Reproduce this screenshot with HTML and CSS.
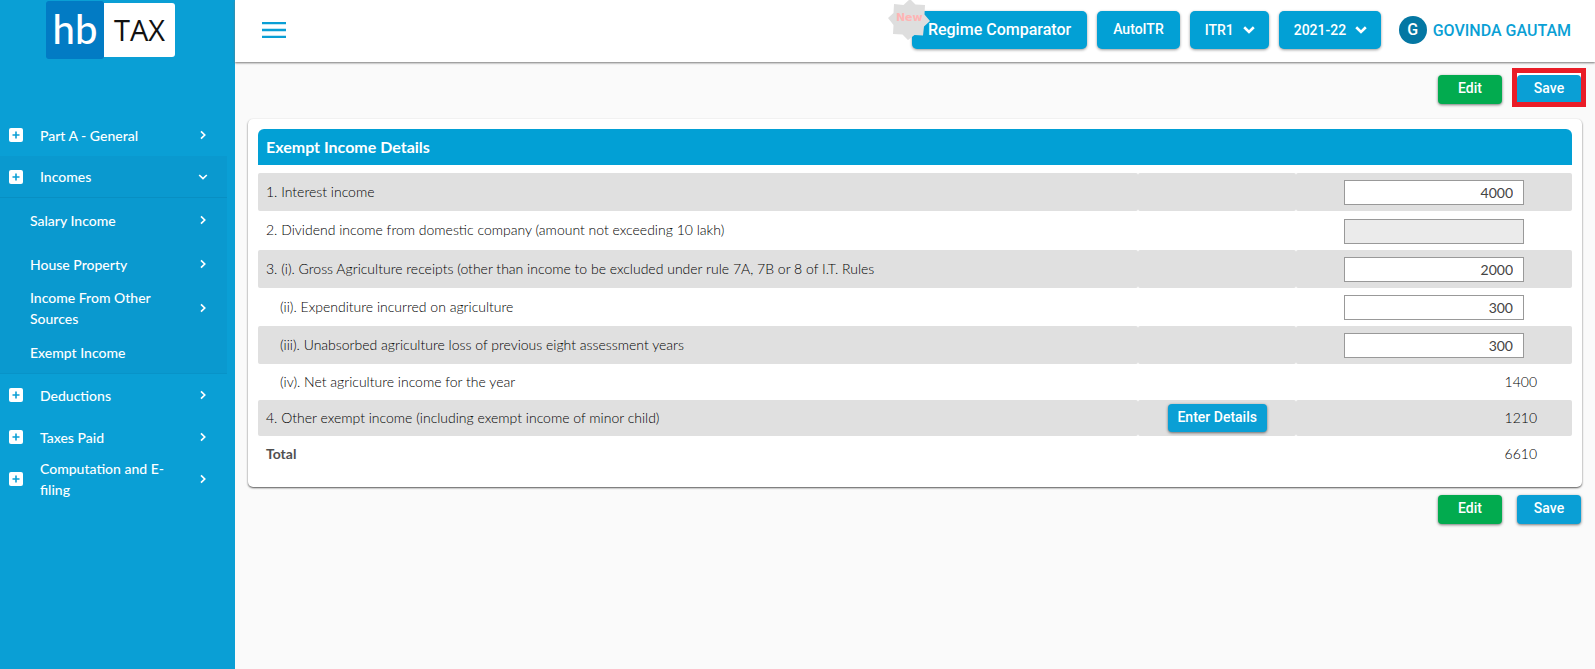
FILE: index.html
```html
<!DOCTYPE html>
<html lang="en">
<head>
<meta charset="utf-8">
<title>hb TAX - Exempt Income</title>
<link rel="stylesheet" href="styles.css">
</head>
<body>
<svg class="defs" aria-hidden="true">
  <symbol id="plus" viewBox="0 0 14 14"><rect width="14" height="14" rx="2" fill="#fff"/><path d="M7 3.5v7M3.5 7h7" stroke="#0a9fd5" stroke-width="1.6"/></symbol>
  <symbol id="right" viewBox="0 0 8 10"><path d="M2 1.4 5.7 5 2 8.6" fill="none" stroke="#fff" stroke-width="1.7"/></symbol>
  <symbol id="down" viewBox="0 0 10 8"><path d="M1.2 2 5 5.6 8.8 2" fill="none" stroke="#fff" stroke-width="1.7"/></symbol>
  <symbol id="caret" viewBox="0 0 12 8"><path d="M1.2 1.3 6 6 10.8 1.3" fill="none" stroke="#fff" stroke-width="2.6"/></symbol>
</svg>
<div class="app">
  <aside class="sidebar">
    <div class="logo"><span class="logo-hb">hb</span><span class="logo-tax">TAX</span></div>
    <nav class="menu">
      <a class="item" href="#"><svg class="plus"><use href="#plus"/></svg><span class="label">Part A - General</span><svg class="arrow"><use href="#right"/></svg></a>
      <div class="group">
        <a class="item open" href="#"><svg class="plus"><use href="#plus"/></svg><span class="label">Incomes</span><svg class="arrow"><use href="#down"/></svg></a>
        <a class="sub" href="#"><span class="label">Salary Income</span><svg class="arrow"><use href="#right"/></svg></a>
        <a class="sub" href="#"><span class="label">House Property</span><svg class="arrow"><use href="#right"/></svg></a>
        <a class="sub" href="#"><span class="label">Income From Other Sources</span><svg class="arrow"><use href="#right"/></svg></a>
        <a class="sub" href="#"><span class="label">Exempt Income</span></a>
      </div>
      <a class="item" href="#"><svg class="plus"><use href="#plus"/></svg><span class="label">Deductions</span><svg class="arrow"><use href="#right"/></svg></a>
      <a class="item" href="#"><svg class="plus"><use href="#plus"/></svg><span class="label">Taxes Paid</span><svg class="arrow"><use href="#right"/></svg></a>
      <a class="item" href="#"><svg class="plus"><use href="#plus"/></svg><span class="label">Computation and E-filing</span><svg class="arrow"><use href="#right"/></svg></a>
    </nav>
  </aside>
  <div class="page">
    <header class="topbar">
      <button class="burger" aria-label="Toggle menu"><svg width="24" height="16" viewBox="0 0 24 16"><path d="M0 1h24M0 8h24M0 15h24" stroke="#0a9fd5" stroke-width="2.4"/></svg></button>
      <div class="tools">
        <button class="tool regime">Regime Comparator
          <span class="badge"><svg width="42" height="42" viewBox="-21 -21 42 42"><path fill="#dedede" d="M1-21 6.5-15.5 16-15 15.5-5.5 21 1 15 6.5 14 15.5 5.5 15-1 20-6.500 14.500-16 14-15.500 5-21-2-15.500-7-15-16-5.500-15Z"/></svg><span class="badge-text">New</span></span>
        </button>
        <button class="tool">AutoITR</button>
        <span class="picker"><select class="tool select" aria-label="Form"><option>ITR1</option></select><svg class="caret"><use href="#caret"/></svg></span>
        <span class="picker"><select class="tool select" aria-label="Assessment year"><option>2021-22</option></select><svg class="caret"><use href="#caret"/></svg></span>
        <a class="user" href="#"><span class="avatar">G</span>GOVINDA GAUTAM</a>
      </div>
    </header>
    <main class="content">
      <div class="actions">
        <button class="btn edit">Edit</button>
        <span class="marked"><button class="btn save">Save</button></span>
      </div>
      <section class="card">
        <h1 class="title">Exempt Income Details</h1>
        <table class="rows">
          <colgroup><col class="c1"><col class="c2"><col class="c3"></colgroup>
          <tbody>
          <tr><td><label for="f1">1. Interest income</label></td><td></td><td class="num"><input class="field" id="f1" type="text" value="4000"></td></tr>
          <tr class="tall"><td><label for="f2">2. Dividend income from domestic company (amount not exceeding 10 lakh)</label></td><td></td><td class="num"><input class="field" id="f2" type="text" disabled></td></tr>
          <tr><td><label for="f3">3. (i). Gross Agriculture receipts (other than income to be excluded under rule 7A, 7B or 8 of I.T. Rules</label></td><td></td><td class="num"><input class="field" id="f3" type="text" value="2000"></td></tr>
          <tr><td class="indent"><label for="f4">(ii). Expenditure incurred on agriculture</label></td><td></td><td class="num"><input class="field" id="f4" type="text" value="300"></td></tr>
          <tr><td class="indent"><label for="f5">(iii). Unabsorbed agriculture loss of previous eight assessment years</label></td><td></td><td class="num"><input class="field" id="f5" type="text" value="300"></td></tr>
          <tr class="plain"><td class="indent">(iv). Net agriculture income for the year</td><td></td><td class="sum">1400</td></tr>
          <tr class="plain"><td>4. Other exempt income (including exempt income of minor child)</td><td class="mid"><button class="btn details">Enter Details</button></td><td class="sum">1210</td></tr>
          <tr class="plain"><td class="total">Total</td><td></td><td class="sum">6610</td></tr>
          </tbody>
        </table>
      </section>
      <div class="actions bottom">
        <button class="btn edit">Edit</button>
        <button class="btn save">Save</button>
      </div>
    </main>
  </div>
</div>
</body>
</html>
```
FILE: styles.css
```css
* { box-sizing: border-box; }
body { margin: 0; background: #fafafa; font-family: Lato, sans-serif; font-size: 14px; color: #000; }
button, select, input { font: inherit; margin: 0; }
a { color: inherit; text-decoration: none; }
.defs { display: none; }
.app { display: flex; min-height: 100vh; }

.sidebar { flex: 0 0 235px; background: #0a9fd5; color: #fff; padding-top: 1px; }
.logo { display: flex; align-items: center; margin-left: 46px; height: 58px; margin-bottom: 55px; }
.logo-hb { width: 58px; height: 58px; border-radius: 3px; background: #027bc4; font-size: 40px; font-weight: 500; line-height: 57px; text-align: center; }
.logo-tax { width: 71px; height: 54px; border-radius: 0 3px 3px 0; background: #fff; color: #111; font-family: "Open Sans", sans-serif; font-size: 29px; font-weight: 400; line-height: 53px; text-align: center; }
.menu { display: flex; flex-direction: column; line-height: 21px; width: 227px; font-weight: 500; }
.item { display: flex; align-items: center; height: 42px; padding: 0 19px 0 9px; }
.sub { display: flex; align-items: center; height: 44px; padding: 0 19px 0 30px; }
.label { flex: 1; padding-right: 32px; }
.plus { width: 14px; height: 14px; margin-right: 17px; }
.arrow { width: 10px; height: 10px; }
.group { background: #0a99cf; box-shadow: inset 0 -1px #0893c8; }
.open { border-bottom: 1px solid #088fc3; }

.page { flex: 1; min-width: 0; }
.topbar { display: flex; align-items: center; justify-content: space-between; height: 62px; padding: 0 24px 2px 27px; background: #fff; box-shadow: 0 1px 2px #777; }
.burger { border: 0; background: none; padding: 0; height: 16px; line-height: 0; }
.tools { display: flex; gap: 10px; font-family: Roboto, sans-serif; font-weight: 500; }
.tool { position: relative; height: 38px; border: 0; border-radius: 5px; padding: 0 16px 2px; background: #02a0d5; color: #fff; box-shadow: 0 1px 3px #0006; }
.regime { font-size: 16px; }
.badge { position: absolute; left: -24px; top: -12px; width: 42px; height: 42px; }
.badge-text { position: absolute; left: 8px; top: 12px; color: #ffb4b4; font: bold 11px/14px "DejaVu Sans", sans-serif; }
.picker { display: grid; align-items: center; }
.select { grid-area: 1 / 1; appearance: none; padding: 0 34px 0 15px; }
.caret { grid-area: 1 / 1; position: relative; justify-self: end; width: 12px; height: 8px; margin-right: 14px; pointer-events: none; }
.user { display: flex; align-items: center; gap: 6px; margin-left: 8px; font-size: 16px; color: #0a9fd5; }
.avatar { width: 28px; height: 28px; border-radius: 50%; background: #0477a3; color: #fff; line-height: 28px; text-align: center; }

.content { padding: 6px 13px 0; }
.actions { display: flex; justify-content: flex-end; gap: 10px; padding-right: 1px; }
.actions > .btn { margin-top: 7px; }
.bottom { gap: 15px; padding-top: 1px; }
.marked { display: block; border: 5px solid #e91d27; margin-right: -5px; padding-top: 2px; background: #fff; height: 39px; }
.marked > .save { height: 27px; border-radius: 4px 4px 0 0; padding-bottom: 1px; box-shadow: none; }
.btn { width: 64px; height: 29px; border: 0; border-radius: 4px; padding: 0 0 3px; color: #fff; font-family: Roboto, sans-serif; font-weight: 500; box-shadow: 0 1px 3px #0008; }
.edit { background: #02ab4f; }
.save, .details { background: #0a9fd5; }
.card { margin-top: 12px; padding: 10px 10px 15px; border-radius: 5px; background: #fff; box-shadow: 0 1px 2px #555; }
.title { margin: 0 0 8px; padding: 0 8px; height: 36px; border-radius: 6px 6px 0 0; background: #02a0d5; color: #fff; font-size: 16px; font-weight: 700; line-height: 36px; }
.rows { width: 100%; border-collapse: separate; border-spacing: 0; table-layout: fixed; font-weight: 300; }
.c1 { width: 67%; }
.c2 { width: 12%; }
.c3 { width: 21%; }
.rows tr { height: 38px; }
.rows .tall { height: 39px; }
.rows .plain { height: 36px; }
.rows td { padding: 0 8px 2px; border-radius: 2px; }
.rows tr:nth-child(odd) td { background: #e0e0e0; }
.rows .indent { padding-left: 22px; }
.rows .num { padding-top: 1px; padding-bottom: 0; padding-right: 48px; text-align: right; line-height: 0; }
.rows .sum { padding-right: 35px; text-align: right; }
.rows .mid { padding-bottom: 0; text-align: center; line-height: 0; }
.rows .total { font-weight: 700; color: #505050; }
.field { width: 180px; height: 25px; border: 1px solid #999; border-radius: 0; padding: 0 10px; background: #fff; color: #444; font-weight: 400; text-align: right; }
.field:disabled { background: #ebebeb; }
.details { width: 99px; height: 28px; }
```
